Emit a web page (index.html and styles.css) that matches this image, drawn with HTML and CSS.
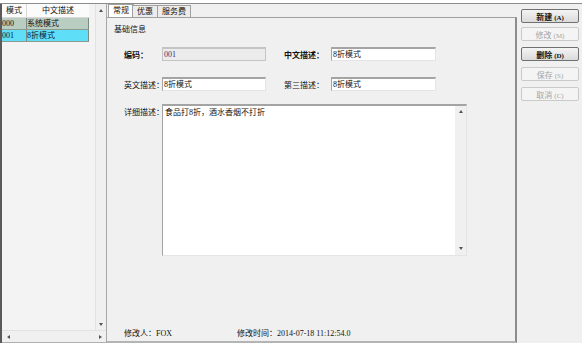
FILE: index.html
```html
<!DOCTYPE html>
<html lang="zh-CN">
<head>
  <meta charset="UTF-8">
  <title>模式设置</title>
  <link rel="stylesheet" href="styles.css">
</head>
<body>

<div class="app">
  <div class="left">
    <div class="grid-main">
      <div class="grid">
        <div class="grid-head">
          <span class="c1">模式</span>
          <span class="c2">中文描述</span>
        </div>
        <div class="grid-row row-a">
          <span class="c1">000</span>
          <span class="c2">系统模式</span>
        </div>
        <div class="grid-row row-b">
          <span class="c1">001</span>
          <span class="c2">8折模式</span>
        </div>
      </div>
      <div class="vscroll">
        <span class="arrow up"></span>
        <span class="arrow down"></span>
      </div>
    </div>
    <div class="hscroll">
      <span class="arrow left-a"></span>
      <span class="arrow right-a"></span>
    </div>
  </div>

  <div class="center">
    <div class="tabs">
      <span class="tab active">常规</span>
      <span class="tab">优惠</span>
      <span class="tab">服务费</span>
    </div>
    <div class="panel">
      <div class="group-title">基础信息</div>
      <div class="form">
        <div class="form-row">
          <label class="lbl bold">编码：</label>
          <div class="inp disabled">001</div>
          <label class="lbl2 bold">中文描述：</label>
          <div class="inp wide">8折模式</div>
        </div>
        <div class="form-row">
          <label class="lbl">英文描述：</label>
          <div class="inp">8折模式</div>
          <label class="lbl2">第三描述：</label>
          <div class="inp wide">8折模式</div>
        </div>
        <div class="form-row">
          <label class="lbl">详细描述：</label>
          <div class="memo">
            <div class="memo-text">食品打8折，酒水香烟不打折</div>
            <div class="memo-scroll">
              <span class="arrow up"></span>
              <span class="arrow down"></span>
            </div>
          </div>
        </div>
      </div>
      <div class="footer">
        <span class="who">修改人：FOX</span>
        <span>修改时间：2014-07-18 11:12:54.0</span>
      </div>
    </div>
  </div>

  <div class="right">
    <button class="btn">新建 <small>(A)</small></button>
    <button class="btn off second">修改 <small>(M)</small></button>
    <button class="btn">删除 <small>(D)</small></button>
    <button class="btn off">保存 <small>(S)</small></button>
    <button class="btn off">取消 <small>(C)</small></button>
  </div>
</div>

</body>
</html>
```

FILE: styles.css
```css
* {
  box-sizing: border-box;
  margin: 0;
  padding: 0;
}

body {
  background: #fff;
  font-family: "Liberation Serif", "Noto Sans CJK SC", serif;
  font-size: 8px;
  color: #111;
}

.app {
  margin-top: 3px;
  height: 340px;
  display: flex;
  border-top: 1px solid #8c8c8c;
  background: #f0f0f0;
}

/* left grid */
.left {
  width: 106px;
  display: flex;
  flex-direction: column;
  border-left: 2px solid #5a5a5a;
  background: #f3f3f3;
}

.grid-main {
  flex: 1;
  display: flex;
}

.grid {
  flex: 1;
}

.grid-head,
.grid-row {
  display: flex;
  width: 87px;
}

.grid-head {
  height: 14px;
  line-height: 14px;
  background: #fbfbfb;
  border-bottom: 1px solid #d8d8d8;
}

.grid-head span {
  text-align: center;
}

.grid-head .c1 {
  border-right: 1px solid #d8d8d8;
}

.c1 {
  width: 25px;
}

.c2 {
  width: 62px;
}

.grid-row {
  height: 12px;
  line-height: 12px;
  border-bottom: 1px solid #8a9a90;
}

.grid-row .c1 {
  border-right: 1px solid #7a8a80;
}

.grid-row .c2 {
  border-right: 1px solid #7a8a80;
}

.row-a {
  background: #b9cdc1;
}

.row-b {
  background: #5fdef8;
  color: #0a1a40;
}

.vscroll {
  width: 11px;
  display: flex;
  flex-direction: column;
  justify-content: space-between;
  align-items: center;
  padding: 5px 0 4px;
  border-left: 1px solid #e2e2e2;
  background: #f0f0f0;
}

.hscroll {
  height: 13px;
  display: flex;
  justify-content: space-between;
  align-items: center;
  padding: 0 4px 0 5px;
  border-top: 1px solid #e2e2e2;
  border-bottom: 1px solid #b0b0b0;
  background: #f0f0f0;
}

.arrow {
  width: 0;
  height: 0;
  border: 2px solid transparent;
}

.arrow.up {
  border-bottom: 3px solid #555;
  border-top-width: 0;
}

.arrow.down {
  border-top: 3px solid #555;
  border-bottom-width: 0;
}

.arrow.left-a {
  border-right: 3px solid #555;
  border-left-width: 0;
}

.arrow.right-a {
  border-left: 3px solid #555;
  border-right-width: 0;
}

/* tabs */
.center {
  width: 411px;
  display: flex;
  flex-direction: column;
  border-left: 1px solid #a8a8a8;
}

.tabs {
  display: flex;
  align-items: flex-end;
  height: 13px;
  padding-left: 1px;
}

.tab {
  height: 12px;
  line-height: 11px;
  padding: 0 4px;
  border: 1px solid #a0a0a0;
  border-bottom: none;
  background: #ececec;
}

.tab.active {
  height: 13px;
  background: #fff;
  margin-right: -1px;
}

.tab + .tab {
  margin-left: -1px;
}

.panel {
  flex: 1;
  display: flex;
  flex-direction: column;
  padding: 6px 0 1px 7px;
  border-top: 1px solid #a0a0a0;
  border-right: 2px solid #8c8c8c;
  border-bottom: 2px solid #b4b4b4;
}

.group-title {
  line-height: 12px;
}

.form {
  margin: 11px 0 0 10px;
  display: flex;
  flex-direction: column;
  gap: 16px;
}

.form-row {
  display: flex;
  align-items: center;
}

.form-row:last-child {
  align-items: flex-start;
  margin-top: -3px;
}

.bold {
  font-weight: bold;
}

.lbl {
  width: 38px;
  white-space: nowrap;
}

.form-row:last-child .lbl {
  padding-top: 2px;
}

.lbl2 {
  width: 47px;
  margin-left: 18px;
  white-space: nowrap;
}

.inp {
  width: 104px;
  height: 14px;
  line-height: 12px;
  padding-left: 1px;
  background: #fff;
  border: 1px solid #e4e4e4;
  border-top: 2px solid #a4a4a4;
  border-left: 1px solid #a4a4a4;
}

.inp.wide {
  width: 105px;
}

.inp.disabled {
  background: #ececec;
  color: #3a3070;
  border-color: #c4c4c4;
}

.memo {
  width: 305px;
  height: 152px;
  display: flex;
  background: #fff;
  border: 1px solid #e4e4e4;
  border-top: 2px solid #a4a4a4;
  border-left: 1px solid #a4a4a4;
}

.memo-text {
  flex: 1;
  padding: 1px 2px;
  line-height: 12px;
}

.memo-scroll {
  width: 11px;
  display: flex;
  flex-direction: column;
  justify-content: space-between;
  align-items: center;
  padding: 4px 0 5px;
  background: #f0f0f0;
}

.footer {
  margin-top: auto;
  padding-left: 10px;
  line-height: 12px;
  display: flex;
}

.who {
  width: 113px;
}

/* buttons */
.right {
  flex: 1;
  display: flex;
  flex-direction: column;
  gap: 6px;
  padding: 5px 0 0 4px;
}

.btn {
  width: 58px;
  height: 14px;
  font-family: inherit;
  font-size: 8px;
  font-weight: bold;
  color: #111;
  border: 1px solid #707070;
  border-radius: 2px;
  background: linear-gradient(#f4f4f4, #dadada);
}

.btn small {
  font-size: 7px;
}

.btn.off {
  font-weight: normal;
  color: #a4a4a4;
  border-color: #cacaca;
  background: #f4f4f4;
}

.btn.second {
  margin-top: -2px;
}
```
